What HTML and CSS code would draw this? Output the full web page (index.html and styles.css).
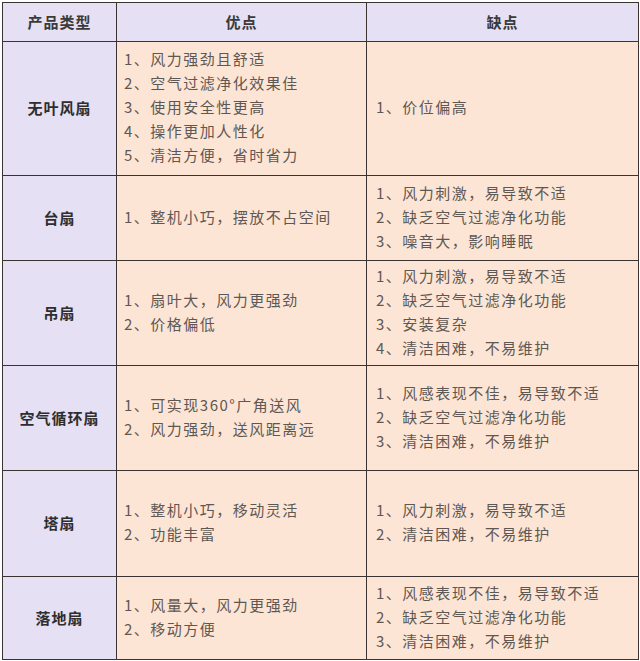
FILE: index.html
```html
<!DOCTYPE html>
<html lang="zh">
<head>
<meta charset="utf-8">
<link rel="stylesheet" href="styles.css">
</head>
<body>
<table class="cmp">
  <colgroup><col class="c1"><col class="c2"><col class="c3"></colgroup>
  <thead>
    <tr class="r0"><th>产品类型</th><th>优点</th><th>缺点</th></tr>
  </thead>
  <tbody>
    <tr class="r1">
      <th>无叶风扇</th>
      <td>1、风力强劲且舒适<br>2、空气过滤净化效果佳<br>3、使用安全性更高<br>4、操作更加人性化<br>5、清洁方便，省时省力</td>
      <td>1、价位偏高</td>
    </tr>
    <tr class="r2">
      <th>台扇</th>
      <td>1、整机小巧，摆放不占空间</td>
      <td>1、风力刺激，易导致不适<br>2、缺乏空气过滤净化功能<br>3、噪音大，影响睡眠</td>
    </tr>
    <tr class="r3">
      <th>吊扇</th>
      <td>1、扇叶大，风力更强劲<br>2、价格偏低</td>
      <td>1、风力刺激，易导致不适<br>2、缺乏空气过滤净化功能<br>3、安装复杂<br>4、清洁困难，不易维护</td>
    </tr>
    <tr class="r4">
      <th>空气循环扇</th>
      <td>1、可实现360°广角送风<br>2、风力强劲，送风距离远</td>
      <td>1、风感表现不佳，易导致不适<br>2、缺乏空气过滤净化功能<br>3、清洁困难，不易维护</td>
    </tr>
    <tr class="r5">
      <th>塔扇</th>
      <td>1、整机小巧，移动灵活<br>2、功能丰富</td>
      <td>1、风力刺激，易导致不适<br>2、清洁困难，不易维护</td>
    </tr>
    <tr class="r6">
      <th>落地扇</th>
      <td>1、风量大，风力更强劲<br>2、移动方便</td>
      <td>1、风感表现不佳，易导致不适<br>2、缺乏空气过滤净化功能<br>3、清洁困难，不易维护</td>
    </tr>
  </tbody>
</table>
</body>
</html>
```

FILE: styles.css
```css
html, body {
  margin: 0;
  padding: 0;
  background: #ffffff;
}
body {
  padding: 2px 0 0 2px;
  font-family: "Noto Sans CJK SC", "Noto Sans", sans-serif;
}
.cmp {
  border-collapse: collapse;
  table-layout: fixed;
  width: 636px;
  border: 1.5px solid #2e2626;
}
.c1 { width: 114px; }
.c2 { width: 250px; }
.c3 { width: 272px; }
.cmp th, .cmp td {
  border: 1px solid #3b3232;
  padding: 0;
  vertical-align: middle;
}
.cmp thead th {
  background: #e5e0f4;
  color: #3a3a3a;
  font-size: 15px;
  font-weight: 700;
  letter-spacing: 1px;
  text-align: center;
  line-height: 20px;
  padding-bottom: 1px;
}
.cmp tbody th {
  background: #e5e0f4;
  color: #2e2e2e;
  font-size: 15px;
  font-weight: 700;
  letter-spacing: 1px;
  text-align: center;
  padding-bottom: 2px;
}
.cmp td {
  background: #fde5d5;
  color: #5e5854;
  font-size: 15px;
  letter-spacing: 1.5px;
  line-height: 24px;
  text-align: left;
  padding-left: 7px;
  padding-bottom: 3px;
  white-space: nowrap;
}
.cmp td + td { padding-left: 9px; }
.r0 { height: 39px; }
.r1 { height: 134px; }
.r2 { height: 85px; }
.r3 { height: 105px; }
.r4 { height: 105px; }
.r5 { height: 106px; }
.r6 { height: 83px; }
```
